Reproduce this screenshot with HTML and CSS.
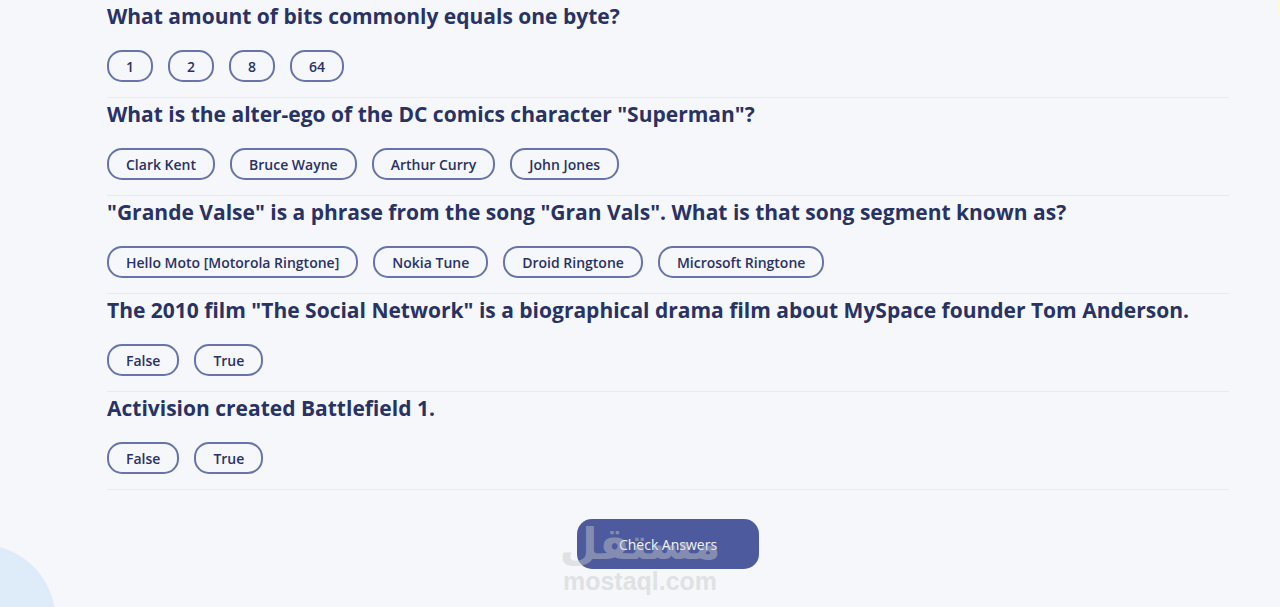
FILE: index.html
```
<!DOCTYPE html>
<html lang="en">
<head>
    <meta charset="UTF-8">
    <title>Quizzical</title>
    <meta name="viewport" content="width=device-width, initial-scale=1">
    <link rel="stylesheet" href="styles.css">
</head>

<body>
<main class="quiz">
    <section class="question">
        <h2>What amount of bits commonly equals one byte?</h2>
        <div class="answers">
            <button type="button" class="answer">1</button>
            <button type="button" class="answer">2</button>
            <button type="button" class="answer">8</button>
            <button type="button" class="answer">64</button>
        </div>
    </section>
    <section class="question">
        <h2>What is the alter-ego of the DC comics character "Superman"?</h2>
        <div class="answers">
            <button type="button" class="answer">Clark Kent</button>
            <button type="button" class="answer">Bruce Wayne</button>
            <button type="button" class="answer">Arthur Curry</button>
            <button type="button" class="answer">John Jones</button>
        </div>
    </section>
    <section class="question">
        <h2>"Grande Valse" is a phrase from the song "Gran Vals". What is that song segment known as?</h2>
        <div class="answers">
            <button type="button" class="answer">Hello Moto [Motorola Ringtone]</button>
            <button type="button" class="answer">Nokia Tune</button>
            <button type="button" class="answer">Droid Ringtone</button>
            <button type="button" class="answer">Microsoft Ringtone</button>
        </div>
    </section>
    <section class="question">
        <h2>The 2010 film "The Social Network" is a biographical drama film about MySpace founder Tom Anderson.</h2>
        <div class="answers">
            <button type="button" class="answer">False</button>
            <button type="button" class="answer">True</button>
        </div>
    </section>
    <section class="question">
        <h2>Activision created Battlefield 1.</h2>
        <div class="answers">
            <button type="button" class="answer">False</button>
            <button type="button" class="answer">True</button>
        </div>
    </section>
    <div class="actions">
        <button type="button" class="check">Check Answers</button>
    </div>
</main>
<div class="watermark">
    <span class="watermark-name" lang="ar" dir="rtl">مستقل</span>
    <span class="watermark-site">mostaql.com</span>
</div>
</body>
</html>
```
FILE: styles.css
```
* {
    box-sizing: border-box;
}
body {
    margin: 0;
    min-height: 100vh;
    position: relative;
    background-color: #f5f7fb;
    /* blue blob bottom left, yellow blob top right */
    background-image:
        radial-gradient(circle at -20px calc(100% + 13px), #deebf8 75px, transparent 76px),
        radial-gradient(circle at calc(100% + 78px) 0, #fffad1 80px, transparent 81px);
    color: #293264;
    font-family: "Segoe UI", "Open Sans", "Noto Sans", sans-serif;
}
button {
    font-family: inherit;
    cursor: pointer;
}
.quiz {
    padding: 0 51px 37px 107px;
}
.question {
    padding-bottom: 15px;
    border-bottom: 1px solid #e8eaf0;
}
.question h2 {
    margin: 0 0 18px;
    font-size: 21px;
    line-height: 32px;
    font-weight: 700;
}
.answers {
    display: flex;
    flex-wrap: wrap;
    gap: 15px;
}
.answer {
    height: 32px;
    padding: 0 17px;
    border: 2px solid #6873ac;
    border-radius: 15px;
    background-color: transparent;
    color: #293264;
    font-size: 14px;
    font-weight: 600;
}
.actions {
    display: flex;
    justify-content: center;
    padding-top: 29px;
}
.check {
    height: 50px;
    padding: 0 42px;
    border: none;
    border-radius: 15px;
    background-color: #4d5b9e;
    color: #f5f7fb;
    font-size: 14px;
}
.watermark {
    position: absolute;
    left: 50%;
    bottom: 11px;
    transform: translateX(-50%);
    display: flex;
    flex-direction: column;
    align-items: center;
    color: #c8c8c8;
    opacity: 0.45;
    pointer-events: none;
}
.watermark-name {
    font-family: "DejaVu Sans", sans-serif;
    font-size: 44px;
    line-height: 44px;
    font-weight: 700;
}
.watermark-site {
    font-family: "Liberation Sans", Arial, sans-serif;
    font-size: 25px;
    line-height: 30px;
    font-weight: 700;
}
```
